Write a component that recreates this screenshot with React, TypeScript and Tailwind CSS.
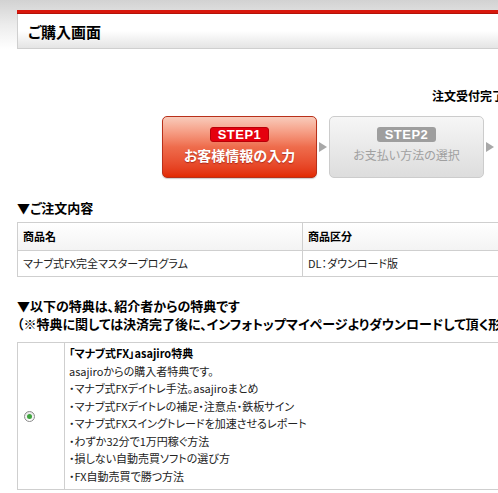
const jp = "font-['Noto_Sans_CJK_JP','Noto_Sans',sans-serif] [font-feature-settings:'palt']";

const bonusLines = [
  "asajiroからの購入者特典です。",
  "・マナブ式FXデイトレ手法。asajiroまとめ",
  "・マナブ式FXデイトレの補足・注意点・鉄板サイン",
  "・マナブ式FXスイングトレードを加速させるレポート",
  "・わずか32分で1万円稼ぐ方法",
  "・損しない自動売買ソフトの選び方",
  "・FX自動売買で勝つ方法",
];

function Arrow() {
  return (
    <div className="w-[12px] flex justify-center items-center">
      <div className="w-0 h-0 border-y-[5px] border-y-transparent border-l-[8px] border-l-[#a8a8a8]" />
    </div>
  );
}

export default function App() {
  return (
    <div className={`w-[498px] h-[493px] overflow-hidden bg-white text-black ${jp}`}>
      {/* top bar */}
      <div className="bg-gradient-to-b from-[#d2d2d2] via-[#ececec] to-white pt-[10px]">
        <div className="ml-[17px] w-[640px]">
          <div className="h-[4px] bg-[#d8170c] border-b border-[#b31208]" />
          <div className="h-[35px] border-l border-b border-[#cfcfcf] bg-gradient-to-b from-white via-white to-[#e4e4e4] flex items-center pl-[10px]">
            <span className="text-[15px] font-bold leading-none">ご購入画面</span>
          </div>
        </div>
      </div>

      <div className="ml-[17px] w-[700px]">
        <div className="pl-[415px] pt-[38px] h-[67px] text-[12px] font-bold whitespace-nowrap">
          注文受付完了
        </div>

        {/* steps */}
        <div className="flex pl-[145px] h-[62px]">
          <div className="w-[155px] h-[62px] rounded-[5px] border border-[#b8301a] bg-gradient-to-b from-[#f8cbbb] via-[#ee6c4c] to-[#e22a00] flex flex-col items-center pt-[10px] shadow-[0_1px_1px_rgba(0,0,0,0.2)]">
            <div className="w-[59px] h-[15px] rounded-[3px] bg-[#e5000e] border border-[#b80008] flex items-center justify-center">
              <span className="font-['Liberation_Sans',sans-serif] font-black text-[13px] leading-none text-white tracking-[0.5px]">
                STEP1
              </span>
            </div>
            <div className="mt-[6px] text-[14px] font-bold text-white leading-none [text-shadow:0_1px_1px_rgba(120,0,0,0.5)]">
              お客様情報の入力
            </div>
          </div>
          <Arrow />
          <div className="w-[155px] h-[62px] rounded-[5px] border border-[#cccccc] bg-gradient-to-b from-[#f6f6f6] to-[#dddddd] flex flex-col items-center pt-[10px]">
            <div className="w-[59px] h-[15px] rounded-[3px] bg-[#9e9e9e] flex items-center justify-center">
              <span className="font-['Liberation_Sans',sans-serif] font-black text-[13px] leading-none text-white tracking-[0.5px]">
                STEP2
              </span>
            </div>
            <div className="mt-[7px] text-[12px] text-[#a0a0a0] leading-none">
              お支払い方法の選択
            </div>
          </div>
          <Arrow />
        </div>

        {/* order */}
        <div className="mt-[23px] text-[13px] font-bold leading-none">▼ご注文内容</div>
        <table className="mt-[8px] w-[640px] border-collapse text-[11px]">
          <tbody>
            <tr className="h-[28px] bg-gradient-to-b from-white to-[#f3f3f3]">
              <th className="w-[285px] border border-[#cfcfcf] text-left font-bold pl-[5px]">商品名</th>
              <th className="border border-[#cfcfcf] text-left font-bold pl-[5px]">商品区分</th>
            </tr>
            <tr className="h-[26px]">
              <td className="border border-[#cfcfcf] pl-[5px] text-[#222]">マナブ式FX完全マスタープログラム</td>
              <td className="border border-[#cfcfcf] pl-[5px] text-[#222]">DL：ダウンロード版</td>
            </tr>
          </tbody>
        </table>

        {/* bonus */}
        <div className="mt-[20px] text-[13px] font-bold leading-[18px] whitespace-nowrap">
          <div>▼以下の特典は、紹介者からの特典です</div>
          <div>（※特典に関しては決済完了後に、インフォトップマイページよりダウンロードして頂く形となります。）</div>
        </div>
        <div className="mt-[9px] w-[640px] flex border border-[#cfcfcf]">
          <div className="w-[47px] border-r border-[#cfcfcf] flex items-center pl-[6px]">
            <div className="w-[11px] h-[11px] rounded-full border border-[#8a8a8a] bg-gradient-to-b from-[#e8e8e8] to-white flex items-center justify-center">
              <div className="w-[5px] h-[5px] rounded-full bg-[#3fa33f]" />
            </div>
          </div>
          <div className="flex-1 pl-[4px] pt-[2px] pb-[4px] text-[11px] leading-[17.5px] text-[#222]">
            <div className="font-bold text-black">「マナブ式FX」asajiro特典</div>
            {bonusLines.map((l) => (
              <div key={l}>{l}</div>
            ))}
          </div>
        </div>
      </div>
    </div>
  );
}
